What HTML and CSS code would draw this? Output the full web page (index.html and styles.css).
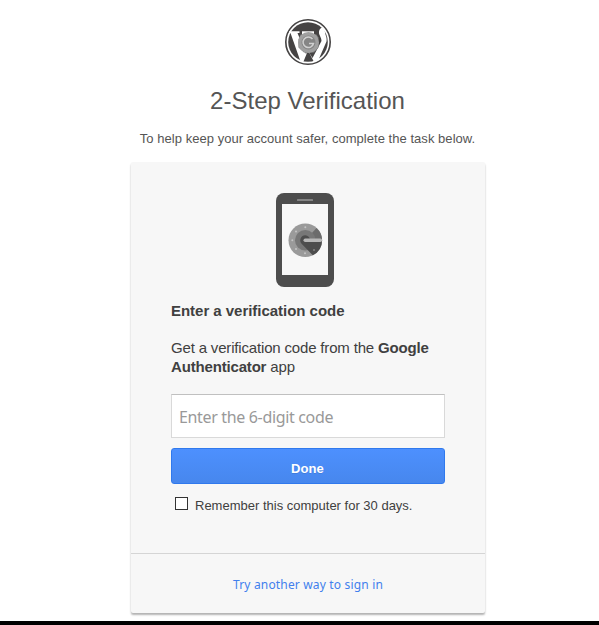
FILE: index.html
```html
<!DOCTYPE html>
<html lang="en">
<head>
<meta charset="utf-8">
<title>2-Step Verification</title>
<link rel="stylesheet" href="styles.css">
</head>
<body>
<main class="page">
  <svg class="logo" viewBox="0 0 46 46" aria-hidden="true">
    <circle cx="23" cy="23" r="22.2" fill="#fff" stroke="#454343" stroke-width="1.6"/>
    <circle cx="23" cy="23" r="19.800" fill="#454343"/>
    <path d="M4 12.300H14.500v1.700h-2L21 35l2-5 2 5 2.500 4L36.500 22c0-4-3-6-2.500-9.500.4-2.500 2-4 4.500-4l1.500 2c-1 4 2.500 7 1.500 12L33 42h-4.500L23 31.500 18.500 42.500h-3L5.500 14H4z" fill="#fff"/>
    <path d="M17 12.300h12v4H17z" fill="#fff"/>
    <path d="M15.500 15.500h16l2 3v10l-4.500 5H19l-5.500-5v-8z" fill="#7c7c7c"/>
    <circle cx="23.500" cy="23.500" r="10.500" fill="#a0a0a0"/>
    <circle cx="23.500" cy="23.500" r="7" fill="#858585"/>
    <path d="M27.500 20a5.300 5.300 0 1 0 1 4.500H24" fill="none" stroke="#d0d0d0" stroke-width="1.500"/>
  </svg>
  <h1 class="title">2-Step Verification</h1>
  <p class="subtitle">To help keep your account safer, complete the task below.</p>
  <section class="card">
    <form class="challenge">
      <svg class="phone" viewBox="0 0 58 95" aria-hidden="true">
        <rect x="0" y="0" width="58" height="94" rx="8" fill="#4d4d4d"/>
        <rect x="21" y="6" width="16" height="2" rx=".5" fill="#858585"/>
        <rect x="6" y="11" width="46" height="71" fill="#f7f7f7"/>
        <circle cx="29.300" cy="47.300" r="16.800" fill="#9a9a9a"/>
        <path d="M29.300 47.300 40.500 35a16.800 16.800 0 0 1 5.600 12.300z" fill="#6c6c6c"/>
        <circle cx="29.300" cy="47.300" r="10.300" fill="#777"/>
        <path d="M29.300 42.300a5 5 0 0 0-3.700 8.400L36.800 62.300a16.800 16.800 0 0 0 9.300-15H34a5 5 0 0 0-4.700-5z" fill="#4d4d4d"/>
        <rect x="27.500" y="45.600" width="18.600" height="3.400" rx="1.700" fill="#b7b7b7"/>
        <g fill="#c4c4c4"><circle cx="29.300" cy="34.300" r="1"/><circle cx="20" cy="38.500" r="1"/><circle cx="16.300" cy="47.300" r="1"/><circle cx="20" cy="56" r="1"/><circle cx="29" cy="60.300" r="1"/></g>
        <circle cx="38" cy="57" r="1" fill="#858585"/>
      </svg>
      <h2 class="heading">Enter a verification code</h2>
      <p class="hint">Get a verification code from the <b>Google</b><br><b>Authenticator</b> app</p>
      <input class="code" type="text" placeholder="Enter the 6-digit code" aria-label="Code">
      <button class="done" type="button">Done</button>
      <label class="remember"><input class="box" type="checkbox"><span>Remember this computer for 30 days.</span></label>
    </form>
    <footer class="other"><a class="link">Try another way to sign in</a></footer>
  </section>
</main>
<div class="bar"></div>
</body>
</html>
```

FILE: styles.css
```css
* { box-sizing: border-box; }
body {
  margin: 0;
  height: 625px;
  overflow: hidden;
  display: flex;
  flex-direction: column;
  justify-content: space-between;
  background: #fff;
  color: #404040;
  font: 13px/19px "Liberation Sans", Arial, sans-serif;
}
.page {
  width: 354px;
  margin-left: 131px;
  padding-top: 19px;
  display: flex;
  flex-direction: column;
  align-items: center;
}
.logo { width: 46px; height: 46px; }
.title {
  margin: 20px 1px 0 0;
  font-size: 24px;
  line-height: 32px;
  font-weight: 400;
  color: #555;
}
.subtitle {
  margin: 12px 1px 0 0;
  color: #555;
  white-space: nowrap;
  letter-spacing: .04px;
}
.card {
  width: 354px;
  height: 451px;
  margin-top: 14px;
  background: #f7f7f7;
  border-radius: 2px;
  box-shadow: 0 2px 2px rgba(0, 0, 0, .3);
  display: flex;
  flex-direction: column;
}
.challenge {
  height: 391px;
  padding: 31px 40px 0;
  display: flex;
  flex-direction: column;
}
.phone { width: 58px; height: 95px; align-self: center; margin-right: 6px; }
.heading {
  margin: 13px 0 0;
  font-size: 15px;
  line-height: 19px;
  letter-spacing: -.03px;
  white-space: nowrap;
}
.hint {
  margin: 18px 0 0;
  font-size: 15px;
  line-height: 19px;
  letter-spacing: -.17px;
  white-space: nowrap;
}
.code {
  width: 274px;
  height: 44px;
  margin-top: 18px;
  padding: 1px 7px 0;
  border: 1px solid #d9d9d9;
  border-top-color: #c0c0c0;
  border-radius: 0;
  font: 16px "Noto Sans", sans-serif;
  letter-spacing: -.34px;
}
.code::placeholder { color: #999; opacity: 1; }
.done {
  width: 274px;
  height: 36px;
  margin-top: 10px;
  padding: 4px 1px 0 0;
  border: 1px solid #3079ed;
  border-radius: 3px;
  background: linear-gradient(#4d90fe, #4787ed);
  color: #fff;
  font: bold 13px "Liberation Sans", Arial, sans-serif;
  letter-spacing: .1px;
  text-shadow: 0 1px rgba(0, 0, 0, .1);
}
.remember {
  margin: 12px 0 0 4px;
  display: flex;
  align-items: flex-start;
  white-space: nowrap;
}
.remember span { margin-left: 7px; }
.box {
  appearance: none;
  width: 13px;
  height: 13px;
  margin: 1px 0 0;
  border: 1px solid #333;
  background: #fff;
}
.other {
  height: 60px;
  padding-top: 21px;
  border-top: 1px solid #d5d5d5;
  text-align: center;
}
.link {
  color: #427fed;
  font: 12px/19px "Noto Sans", sans-serif;
  letter-spacing: .17px;
}
.bar { height: 4px; background: #000; }
```
